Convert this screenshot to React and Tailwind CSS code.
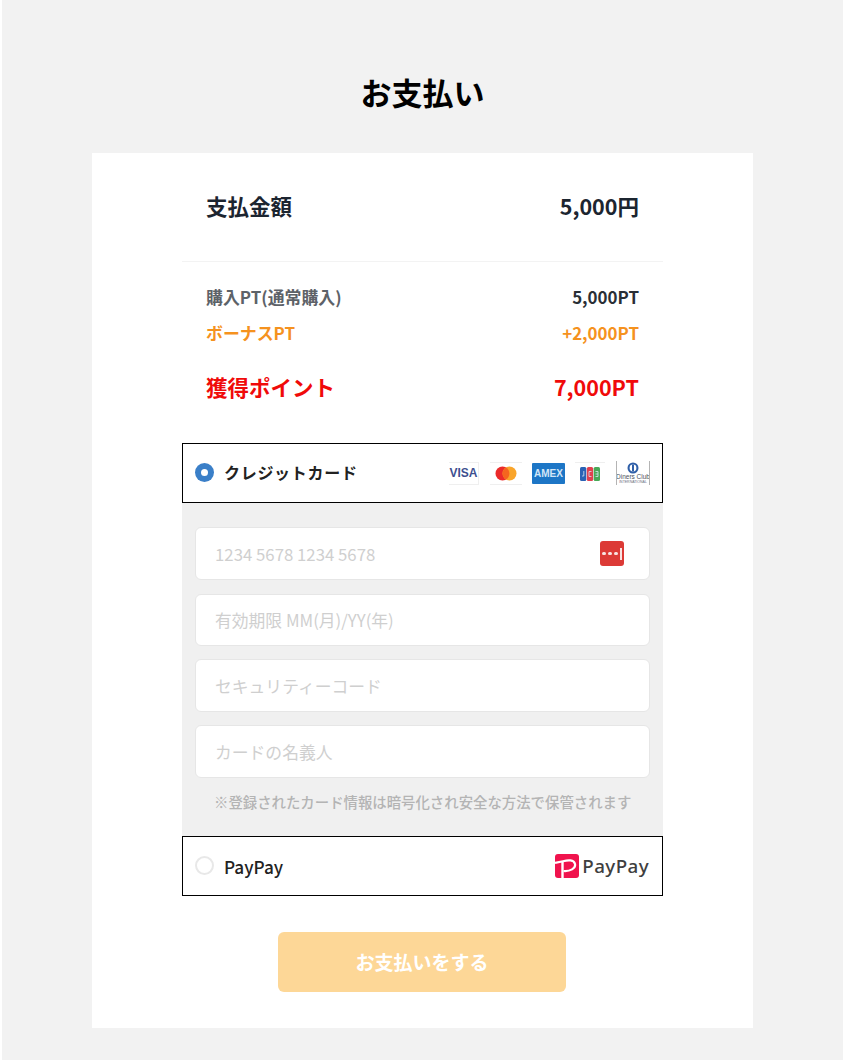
const jp = { fontFamily: '"Noto Sans CJK JP", "Noto Sans", sans-serif' };
const arial = { fontFamily: '"Liberation Sans", sans-serif' };

function Radio({ on }) {
  return on ? (
    <span className="w-[19px] h-[19px] rounded-full bg-[#3a7fc8] flex items-center justify-center shrink-0">
      <span className="w-[7px] h-[7px] rounded-full bg-white" />
    </span>
  ) : (
    <span className="w-[19px] h-[19px] rounded-full border-2 border-[#e8e8e8] bg-white shrink-0" />
  );
}

function Field({ text, h, children }) {
  return (
    <div className={"bg-white rounded-md border border-[#e6e6e6] flex items-center justify-between pl-[19px] pr-[24px] text-[16.800px] text-[#cfcfcf] " + h}>
      <span className="pt-[2px]">{text}</span>
      {children}
    </div>
  );
}

function Row({ left, right, cls, rightCls = "" }) {
  return (
    <div className={"flex justify-between items-center font-bold " + cls}>
      <span>{left}</span>
      <span className={rightCls}>{right}</span>
    </div>
  );
}

export default function App() {
  return (
    <div className="w-[845px] h-[1060px] bg-white px-[2px] overflow-hidden" style={jp}>
      <div className="w-[841px] h-[1060px] bg-[#f2f2f2] pt-[70px]">
        <h1 className="text-[31px] leading-[44px] font-bold text-black text-center h-[83px]">お支払い</h1>
        <div className="ml-[90px] w-[661px] h-[875px] bg-white px-[90px]">
          <div className="h-[109px] border-b border-[#f3f3f3] flex justify-between items-center pl-[24px] pr-[24px] pb-[1px] text-[21.500px] font-bold text-[#1c2530]">
            <span>支払金額</span>
            <span>5,000円</span>
          </div>
          <div className="pl-[24px] pr-[24px] pt-[17px] h-[181px]">
            <Row left="購入PT(通常購入)" right="5,000PT" cls="h-[36px] text-[16.900px] text-[#5d6268]" rightCls="text-[#2a2f36]" />
            <Row left="ボーナスPT" right="+2,000PT" cls="h-[36px] text-[16.900px] text-[#f5921e]" />
            <Row left="獲得ポイント" right="7,000PT" cls="h-[36px] mt-[18px] text-[21.500px] text-[#f00a0a]" />
          </div>
          <div className="h-[60px] border border-black flex items-center justify-between pl-[12px] pr-[12px]">
            <div className="flex items-center gap-[10px] -translate-y-[1px]">
              <Radio on />
              <span className="text-[16px] font-bold text-[#222] tracking-[0.7px]">クレジットカード</span>
            </div>
            <div className="flex items-center">
              <span className="w-[30px] h-[23px] flex items-center justify-center border-t border-r border-b border-[#efefef]">
                <span className="text-[12px] font-bold text-[#3d4f8f]" style={arial}>VISA</span>
              </span>
              <span className="ml-[11px] w-[32px] h-[23px] flex items-center justify-center border-t border-b border-[#efefef]">
                <svg width="22" height="15" viewBox="0 0 22 15">
                  <circle cx="7.500" cy="7.500" r="7" fill="#eb2a2a" />
                  <circle cx="14.500" cy="7.500" r="7" fill="#f9a52b" />
                  <path d="M11 1.500a7 7 0 0 1 0 12a7 7 0 0 1 0-12z" fill="#f5651f" />
                </svg>
              </span>
              <span className="ml-[10px] w-[33px] h-[21px] flex items-center justify-center bg-[#1d76c6] rounded-[1px]">
                <span className="text-[10px] font-bold text-[#d3e6f7]" style={arial}>AMEX</span>
              </span>
              <span className="ml-[10px] w-[30px] h-[23px] flex items-center justify-center border-t border-[#efefef]">
                <svg width="20" height="14" viewBox="0 0 20 14">
                  <rect x="0" y="0" width="6.300" height="14" rx="1.500" fill="#2a62b5" />
                  <rect x="6.850" y="0" width="6.300" height="14" rx="1.500" fill="#e04050" />
                  <rect x="13.700" y="0" width="6.300" height="14" rx="1.500" fill="#48a857" />
                  <path d="M3.800 4v5H2M11.500 4.500H9v5h2.500M15.500 4.500h2.500v5h-2.500M15.500 7h2.500" stroke="#d8e4f2" strokeWidth="0.800" fill="none" />
                </svg>
              </span>
              <span className="ml-[11px] w-[34px] h-[24px] flex flex-col items-center border-x border-[#b4b4b4] overflow-hidden" style={arial}>
                <svg className="mt-[1px] shrink-0" width="12" height="12" viewBox="0 0 12 12">
                  <circle cx="6" cy="6" r="5.500" fill="#2f5fa8" />
                  <circle cx="6" cy="6" r="3.400" fill="#ffffff" />
                  <rect x="5" y="2.600" width="2" height="6.800" fill="#2f5fa8" />
                </svg>
                <span className="text-[6.500px] leading-[6px] text-[#4e5360] whitespace-nowrap">Diners Club</span>
                <span className="text-[3.500px] leading-[4px] text-[#6b7080] whitespace-nowrap">INTERNATIONAL</span>
              </span>
            </div>
          </div>
          <div className="h-[333px] bg-[#f0f0f0] px-[13px] pt-[24px]">
            <Field text="1234 5678 1234 5678" h="h-[53px] mb-[14px]">
              <span className="w-[24px] h-[25px] rounded-[3px] bg-[#dc3a36] flex items-center justify-center gap-[2.500px] mr-[1px]">
                <span className="w-[3.500px] h-[3.500px] rounded-full bg-[#f8e4e2]" />
                <span className="w-[3.500px] h-[3.500px] rounded-full bg-[#f8e4e2]" />
                <span className="w-[3.500px] h-[3.500px] rounded-full bg-[#f8e4e2]" />
                <span className="w-[1.500px] h-[12px] bg-[#f8e4e2]" />
              </span>
            </Field>
            <Field text="有効期限 MM(月)/YY(年)" h="h-[52px] mb-[13px]" />
            <Field text="セキュリティーコード" h="h-[53px] mb-[13px]" />
            <Field text="カードの名義人" h="h-[53px] mb-[13px]" />
            <p className="text-[14.400px] leading-[22px] font-medium text-[#b4b4b4] pl-[19px] whitespace-nowrap">※登録されたカード情報は暗号化され安全な方法で保管されます</p>
          </div>
          <div className="h-[60px] border border-black flex items-center justify-between pl-[12px] pr-[13px]">
            <div className="flex items-center gap-[10px]">
              <Radio />
              <span className="text-[17.200px] font-medium text-[#222] pt-[1px]">PayPay</span>
            </div>
            <div className="flex items-center gap-[3px]">
              <svg width="24" height="24" viewBox="0 0 24 24">
                <rect width="24" height="24" rx="3" fill="#f0134d" />
                <path d="M0 9L8 7.200C13 6 19 5.500 20 10C21 14.500 15 17.500 8.500 17" stroke="#fff" strokeWidth="2.200" fill="none" />
                <path d="M7.500 7.500V24" stroke="#fff" strokeWidth="2.400" fill="none" />
              </svg>
              <span className="text-[18.800px] font-medium text-[#3f3f3f] tracking-[0.4px]" style={{ fontFamily: '"Noto Sans", sans-serif' }}>PayPay</span>
            </div>
          </div>
          <button className="block ml-[96px] mt-[36px] w-[288px] h-[60px] rounded-md bg-[#fdd797] text-white text-[19px] font-bold">お支払いをする</button>
        </div>
      </div>
    </div>
  );
}
